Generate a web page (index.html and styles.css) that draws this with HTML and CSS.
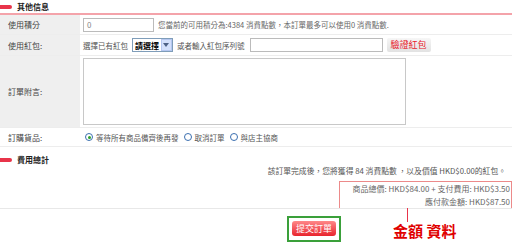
FILE: index.html
```html
<!DOCTYPE html>
<html lang="zh-Hant">
<head>
    <meta charset="UTF-8">
    <title>訂單確認</title>
    <link rel="stylesheet" href="styles.css">
</head>
<body>
    <div class="page">
        <div class="section-title line"><span class="marker"></span>其他信息</div>

        <div class="form">
            <div class="row r1">
                <div class="label">使用積分</div>
                <div class="value">
                    <span class="input points">0</span>
                    <span class="note">您當前的可用積分為:4384 消費點數，本訂單最多可以使用0 消費點數.</span>
                </div>
            </div>
            <div class="row r2">
                <div class="label">使用紅包:</div>
                <div class="value">
                    <span>選擇已有紅包</span>
                    <span class="select">請選擇<span class="arrow"></span></span>
                    <span>或者輸入紅包序列號</span>
                    <span class="input code"></span>
                    <span class="check-btn">驗證紅包</span>
                </div>
            </div>
            <div class="row r3">
                <div class="label">訂單附言:</div>
                <div class="value">
                    <span class="textarea"></span>
                </div>
            </div>
            <div class="row r4">
                <div class="label plain">訂購貨品:</div>
                <div class="value radios">
                    <span class="radio checked"></span><span>等待所有商品備齊後再發</span>
                    <span class="radio"></span><span>取消訂單</span>
                    <span class="radio"></span><span>與店主協商</span>
                </div>
            </div>
        </div>

        <div class="section-title second"><span class="marker"></span>費用總計</div>

        <div class="total">
            <p class="summary">該訂單完成後，您將獲得 84 消費點數 ，以及價值 HKD$0.00的紅包。</p>
            <div class="amount">
                <div>商品總價: HKD$84.00 + 支付費用: HKD$3.50</div>
                <div>應付款金額: HKD$87.50</div>
            </div>
        </div>

        <div class="submit">
            <span class="highlight"><span class="submit-btn">提交訂單</span></span>
        </div>

        <span class="pointer"></span>
        <span class="callout">金額 資料</span>
    </div>
</body>
</html>
```

FILE: styles.css
```css
body {
    margin: 0;
    background: #fff;
    font-family: "Noto Sans CJK TC", "Liberation Sans", sans-serif;
    font-size: 7.5px;
    color: #555;
}
.page {
    position: relative;
    width: 512px;
    height: 243px;
    overflow: hidden;
}
.section-title {
    display: flex;
    align-items: center;
    height: 13px;
    font-weight: bold;
    font-size: 8px;
    color: #222;
}
.section-title.line {
    border-bottom: 2px solid #f4a3aa;
}
.marker {
    width: 12px;
    height: 4px;
    margin-right: 5px;
    background: #e8344a;
    border-radius: 0 2px 2px 0;
}
.row {
    display: flex;
    border-bottom: 1px solid #ededed;
}
.r1 { height: 19px; }
.r2 { height: 20px; }
.r3 { height: 71px; }
.r4 { height: 18px; }
.label {
    width: 72px;
    padding-left: 8px;
    display: flex;
    align-items: center;
    background: #efefef;
    color: #444;
    font-size: 8px;
    margin-right: 3px;
}
.label.plain {
    background: none;
}
.value {
    flex: 1;
    display: flex;
    align-items: center;
    gap: 4px;
}
.input {
    display: inline-block;
    height: 12px;
    border: 1px solid #bbb;
    background: #fff;
    line-height: 12px;
    padding-left: 3px;
    color: #888;
    font-size: 8px;
}
.points { width: 66px; }
.code { width: 128px; margin-left: 1px; }
.note { color: #666; }
.select {
    display: inline-flex;
    align-items: center;
    height: 12px;
    border: 1px solid #7f9db9;
    padding-left: 2px;
    font-weight: bold;
    font-size: 8px;
    color: #000;
    gap: 2px;
}
.arrow {
    width: 9px;
    height: 10px;
    background: #d3e0fb;
    border: 1px solid #b5c7f0;
    position: relative;
}
.arrow::after {
    content: "";
    position: absolute;
    left: 1px;
    top: 3px;
    border-left: 3px solid transparent;
    border-right: 3px solid transparent;
    border-top: 4px solid #4d6185;
}
.check-btn {
    display: inline-block;
    height: 14px;
    line-height: 14px;
    padding: 0 4px;
    background: linear-gradient(#f6f6f6, #e2e2e2);
    border-radius: 2px;
    color: #e8202c;
    font-size: 9px;
}
.textarea {
    display: block;
    width: 321px;
    height: 65px;
    border: 1px solid #c8c8c8;
}
.radios {
    gap: 3px;
}
.radio {
    width: 6px;
    height: 6px;
    border: 1px solid #3b6fb0;
    border-radius: 50%;
    background: #fff;
    position: relative;
    margin-left: 2px;
}
.radio.checked::after {
    content: "";
    position: absolute;
    left: 1.5px;
    top: 1.5px;
    width: 3px;
    height: 3px;
    border-radius: 50%;
    background: #2aa22a;
}
.section-title.second {
    margin-top: 6px;
}
.total {
    border-bottom: 1px solid #e8e8e8;
    height: 42px;
}
.summary {
    margin: 0;
    height: 15px;
    line-height: 10px;
    text-align: right;
    padding-right: 6px;
    font-size: 7.8px;
    color: #555;
}
.amount {
    width: 170px;
    margin-left: auto;
    height: 26px;
    border: 1px solid #ec8a8a;
    border-bottom: none;
    text-align: right;
    padding-right: 1px;
    line-height: 13px;
    font-size: 8px;
    color: #666;
}
.submit {
    padding-top: 7px;
}
.highlight {
    display: inline-block;
    margin-left: 287px;
    border: 2px solid #3aa03a;
    padding: 3px 3px 4px 3px;
}
.submit-btn {
    display: block;
    width: 44px;
    height: 15px;
    line-height: 15px;
    text-align: center;
    color: #fff;
    background: linear-gradient(#f88, #e8242e);
    border-radius: 3px;
    font-size: 9px;
}
.pointer {
    position: absolute;
    left: 407px;
    top: 208px;
    width: 1px;
    height: 14px;
    background: #e8344a;
}
.callout {
    position: absolute;
    left: 393px;
    top: 220px;
    font-size: 15px;
    font-weight: bold;
    color: #e00000;
}
```
